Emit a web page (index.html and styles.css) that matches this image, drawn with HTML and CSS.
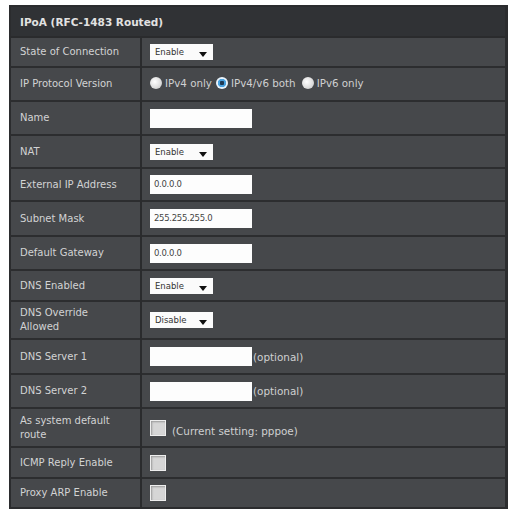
FILE: index.html
```html
<!DOCTYPE html>
<html>
<head>
<meta charset="utf-8">
<link rel="stylesheet" href="styles.css">
</head>
<body>
<div class="wrap">
<table class="cfg">
  <colgroup><col class="c1"><col class="c2"></colgroup>
  <tr class="head"><th colspan="2">IPoA (RFC-1483 Routed)</th></tr>
  <tr class="h30"><td class="lbl">State of Connection</td><td class="val"><span class="sel">Enable<i class="arr"></i></span></td></tr>
  <tr class="h34"><td class="lbl">IP Protocol Version</td><td class="val">
    <span class="radios">
      <span class="rad"></span><span class="rt">IPv4 only</span>
      <span class="rad on"></span><span class="rt">IPv4/v6 both</span>
      <span class="rad"></span><span class="rt">IPv6 only</span>
    </span></td></tr>
  <tr class="h34"><td class="lbl">Name</td><td class="val"><span class="txt"></span></td></tr>
  <tr class="h33"><td class="lbl">NAT</td><td class="val"><span class="sel">Enable<i class="arr"></i></span></td></tr>
  <tr class="h33"><td class="lbl">External IP Address</td><td class="val"><span class="txt">0.0.0.0</span></td></tr>
  <tr class="h35"><td class="lbl">Subnet Mask</td><td class="val"><span class="txt">255.255.255.0</span></td></tr>
  <tr class="h34"><td class="lbl">Default Gateway</td><td class="val"><span class="txt">0.0.0.0</span></td></tr>
  <tr class="h31"><td class="lbl">DNS Enabled</td><td class="val"><span class="sel">Enable<i class="arr"></i></span></td></tr>
  <tr class="h38"><td class="lbl two">DNS Override Allowed</td><td class="val"><span class="sel">Disable<i class="arr"></i></span></td></tr>
  <tr class="h35"><td class="lbl">DNS Server 1</td><td class="val"><span class="txt"></span><span class="note">(optional)</span></td></tr>
  <tr class="h34"><td class="lbl">DNS Server 2</td><td class="val"><span class="txt"></span><span class="note">(optional)</span></td></tr>
  <tr class="h39"><td class="lbl two">As system default route</td><td class="val"><span class="chk"></span><span class="note cur">(Current setting: pppoe)</span></td></tr>
  <tr class="h31"><td class="lbl">ICMP Reply Enable</td><td class="val"><span class="chk"></span></td></tr>
  <tr class="h30"><td class="lbl">Proxy ARP Enable</td><td class="val"><span class="chk"></span></td></tr>
</table>
</div>
</body>
</html>
```
FILE: styles.css
```css
html, body { margin: 0; padding: 0; background: #ffffff; }
.wrap { padding: 5px 4px 0 9px; }
.cfg {
  width: 499px;
  table-layout: fixed;
  border-collapse: collapse;
  background: #46484b;
  font-family: "DejaVu Sans", Verdana, sans-serif;
  font-size: 10px;
  color: #d2d3d4;
  border: 2px solid #2b2c2e;
  border-right-width: 3px;
}
.c1 { width: 131px; }
.cfg th {
  background: #303235;
  text-align: left;
  font-weight: bold;
  color: #e2e2e2;
  padding: 0 0 0 9px;
  height: 29px;
  font-size: 10.5px;
  border-bottom: 2px solid #2a2b2d;
}
.cfg td { border-top: 2px solid #2c2d2f; padding: 0; vertical-align: middle; }
.lbl {
  padding-left: 9px !important;
  border-right: 2px solid #2a2b2d;
  line-height: 14px;
  white-space: nowrap;
  overflow: hidden;
}
.lbl.two { white-space: normal; padding-right: 14px !important; }
.val { padding-left: 8px !important; white-space: nowrap; }
.h30 td { height: 28px; }
.h31 td { height: 29px; }
.h33 td { height: 31px; }
.h34 td { height: 32px; }
.h35 td { height: 33px; }
.h38 td { height: 36px; }
.h39 td { height: 37px; }
.sel {
  position: relative;
  display: inline-block;
  width: 58px;
  height: 16px;
  line-height: 16px;
  padding-left: 5px;
  background: #fbfbfb;
  color: #333;
  font-size: 8.5px;
  vertical-align: middle;
}
.arr {
  position: absolute;
  right: 6px;
  bottom: 3px;
  width: 0; height: 0;
  border-left: 4px solid transparent;
  border-right: 4px solid transparent;
  border-top: 5px solid #111;
}
.txt {
  display: inline-block;
  width: 98px;
  height: 19px;
  line-height: 19px;
  padding-left: 4px;
  background: #fdfdfd;
  color: #444;
  font-size: 8.5px;
  vertical-align: middle;
  letter-spacing: -0.3px;
}
.note { font-size: 10.4px; color: #cfd0d1; vertical-align: middle; margin-left: 1px; }
.note.cur { margin-left: 6px; position: relative; top: 3px; }
.chk {
  display: inline-block;
  width: 14px; height: 14px;
  background: #d6d6d6;
  border: 1px solid #eeeeee;
  vertical-align: middle;
  box-shadow: inset 1px 1px 2px #9a9a9a;
}
.radios { display: inline-flex; align-items: center; }
.rad {
  display: inline-block;
  width: 12px; height: 12px;
  border-radius: 50%;
  background: radial-gradient(circle at 40% 40%, #ffffff 0%, #dcdcdc 60%, #b8b8b8 100%);
  margin-right: 3px;
}
.rad.on {
  background: radial-gradient(circle, #1e3a55 0 2px, #4aa3e0 2.5px 4px, #e9f3fb 4.5px);
  margin-left: 4px;
}
.rt { font-size: 10.3px; color: #cfd0d1; }
.rad:nth-child(5) { margin-left: 6px; }
```
